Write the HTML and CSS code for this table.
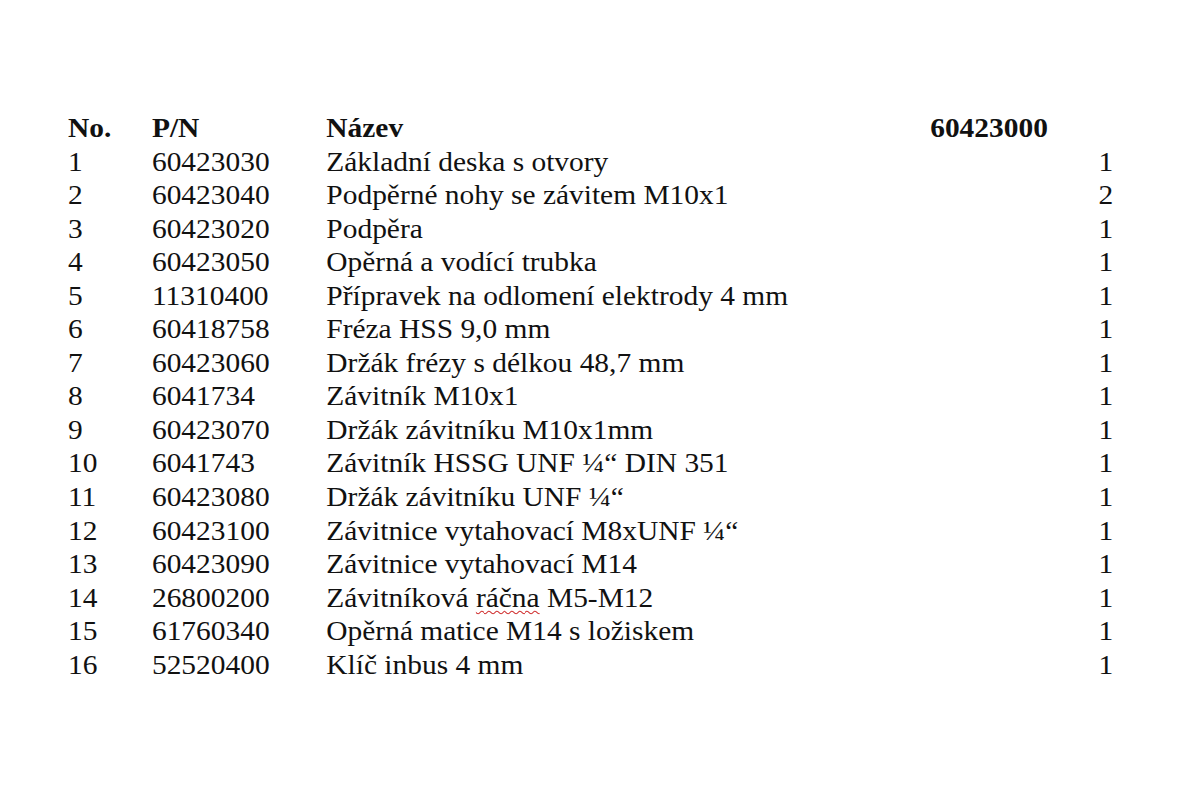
FILE: index.html
```html
<!DOCTYPE html>
<html lang="cs">
<head>
<meta charset="utf-8">
<title>Seznam dílů</title>
<link rel="stylesheet" href="styles.css">
</head>
<body>
<div class="sheet">
  <div class="parts">
    <div class="row head"><span>No.</span><span>P/N</span><span>Název</span><span class="set">60423000</span></div>
    <div class="row"><span>1</span><span>60423030</span><span>Základní deska s otvory</span><span class="qty">1</span></div>
    <div class="row"><span>2</span><span>60423040</span><span>Podpěrné nohy se závitem M10x1</span><span class="qty">2</span></div>
    <div class="row"><span>3</span><span>60423020</span><span>Podpěra</span><span class="qty">1</span></div>
    <div class="row"><span>4</span><span>60423050</span><span>Opěrná a vodící trubka</span><span class="qty">1</span></div>
    <div class="row"><span>5</span><span>11310400</span><span>Přípravek na odlomení elektrody 4 mm</span><span class="qty">1</span></div>
    <div class="row"><span>6</span><span>60418758</span><span>Fréza HSS 9,0 mm</span><span class="qty">1</span></div>
    <div class="row"><span>7</span><span>60423060</span><span>Držák frézy s délkou 48,7 mm</span><span class="qty">1</span></div>
    <div class="row"><span>8</span><span>6041734</span><span>Závitník M10x1</span><span class="qty">1</span></div>
    <div class="row"><span>9</span><span>60423070</span><span>Držák závitníku M10x1mm</span><span class="qty">1</span></div>
    <div class="row"><span>10</span><span>6041743</span><span>Závitník HSSG UNF ¼“ DIN 351</span><span class="qty">1</span></div>
    <div class="row"><span>11</span><span>60423080</span><span>Držák závitníku UNF ¼“</span><span class="qty">1</span></div>
    <div class="row"><span>12</span><span>60423100</span><span>Závitnice vytahovací M8xUNF ¼“</span><span class="qty">1</span></div>
    <div class="row"><span>13</span><span>60423090</span><span>Závitnice vytahovací M14</span><span class="qty">1</span></div>
    <div class="row"><span>14</span><span>26800200</span><span>Závitníková <span class="spell">ráčna</span> M5-M12</span><span class="qty">1</span></div>
    <div class="row"><span>15</span><span>61760340</span><span>Opěrná matice M14 s ložiskem</span><span class="qty">1</span></div>
    <div class="row"><span>16</span><span>52520400</span><span>Klíč inbus 4 mm</span><span class="qty">1</span></div>
  </div>
</div>
</body>
</html>
```
FILE: styles.css
```css
html, body {
  margin: 0;
  padding: 0;
  background: #ffffff;
}
.sheet {
  width: 1200px;
  height: 800px;
  padding-top: 112px;
  box-sizing: border-box;
  font-family: "Liberation Serif", "Times New Roman", serif;
  font-size: 27px;
  color: #111111;
  overflow: hidden;
}
.parts {
  display: flex;
  flex-direction: column;
  margin-left: 68px;
  width: 959px;
  transform: scaleX(1.09);
  transform-origin: left top;
}
.row {
  display: grid;
  grid-template-columns: 77px 160px 554px 168px;
  height: 33.55px;
  line-height: 33.55px;
  white-space: nowrap;
}
.head {
  font-weight: bold;
}
.qty {
  text-align: right;
}
.spell {
  text-decoration: underline wavy #d03030;
  text-decoration-thickness: 1px;
  text-underline-offset: 3px;
}
```
